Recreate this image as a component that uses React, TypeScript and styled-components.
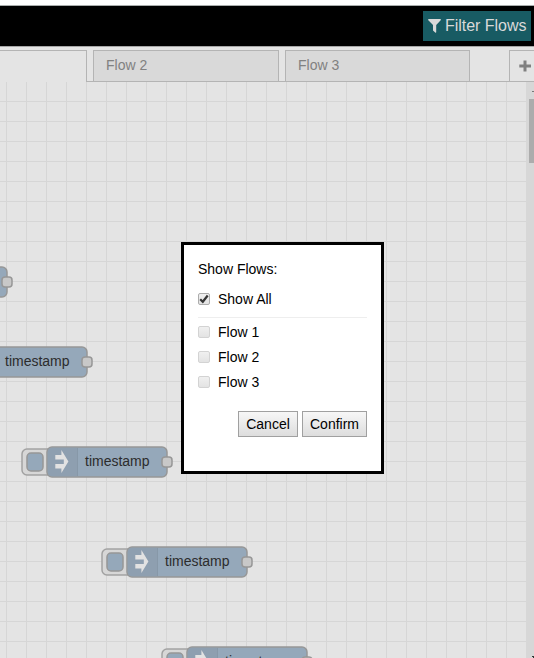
import React from "react";
import styled, { createGlobalStyle } from "styled-components";

const GlobalStyle = createGlobalStyle`
  * { box-sizing: border-box; }
  body { margin: 0; background: #fff; overflow: hidden; font-family: "Liberation Sans", Arial, sans-serif; font-size: 14px; }
`;

const Page = styled.div`
  position: relative;
  display: flex;
  flex-direction: column;
  width: 534px;
  height: 658px;
  padding-top: 5px;
  overflow: hidden;
`;

const Header = styled.header`
  flex: none;
  display: flex;
  justify-content: flex-end;
  align-items: flex-start;
  height: 42px;
  padding: 5px 3px 0 0;
  background: #000;
  border-top: 1px solid #a9adac;
  border-bottom: 1px solid #a6a6a6;
`;

const FilterButton = styled.button`
  display: flex;
  align-items: center;
  gap: 4px;
  width: 108px;
  height: 30px;
  padding: 0 0 0 5px;
  border: 0;
  background: #185b63;
  color: #d9d9d9;
  font: 16px/30px "Liberation Sans", Arial, sans-serif;
  letter-spacing: -0.03px;
  white-space: nowrap;
`;

const TabBar = styled.nav`
  flex: none;
  display: flex;
  height: 35px;
  padding-top: 3px;
  background: linear-gradient(#b4b4b4, #b4b4b4) bottom / 100% 1px no-repeat #e4e4e4;
`;

const Tab = styled.div<{ $width: number; $active?: boolean }>`
  flex: none;
  width: ${(p) => p.$width}px;
  height: ${(p) => (p.$active ? 32 : 31)}px;
  margin-right: 6px;
  padding-left: 12px;
  border: 1px solid #b4b4b4;
  border-bottom: 0;
  border-left-width: ${(p) => (p.$active ? 0 : 1)}px;
  background: ${(p) => (p.$active ? "#e4e4e4" : "#d9d9d9")};
  color: #818181;
  line-height: 28px;
`;

const AddTab = styled.button`
  display: flex;
  align-items: center;
  width: 25px;
  height: 31px;
  margin-left: auto;
  padding: 0 0 0 9px;
  border: solid #b4b4b4;
  border-width: 1px 0 0 1px;
  background: #e4e4e4;
`;

const Workspace = styled.main`
  flex: 1;
  display: flex;
  min-height: 0;
`;

const Canvas = styled.div`
  position: relative;
  flex: 1;
  overflow: hidden;
  background-color: #e4e4e4;
  background-image: linear-gradient(90deg, #d6d6d6 1px, transparent 1px),
    linear-gradient(#d6d6d6 1px, transparent 1px);
  background-size: 20px 20px;
  background-position: 6px 19px;
`;

const Scrollbar = styled.div`
  display: flex;
  flex-direction: column;
  justify-content: space-between;
  align-items: flex-end;
  width: 8px;
  background: #d7d7d7;
`;

const Thumb = styled.div`
  width: 5px;
  height: 64px;
  margin-bottom: auto;
  background: #acacac;
`;

const NodeGroup = styled.div<{ $x: number; $y: number }>`
  position: absolute;
  left: ${(p) => p.$x}px;
  top: ${(p) => p.$y}px;
  width: 154px;
  height: 32px;
`;

const NodeShape = styled.svg`
  display: block;
`;

const NodeLabel = styled.span`
  position: absolute;
  left: 64px;
  top: 0;
  color: #2c2c2c;
  line-height: 30px;
`;

const Dialog = styled.section`
  position: absolute;
  left: 181px;
  top: 242px;
  width: 203px;
  height: 232px;
  padding: 15px 14px 0;
  border: 3px solid #000;
  background: #fff;
  color: #000;
`;

const Title = styled.div`
  height: 19px;
  line-height: 19px;
`;

const Option = styled.label<{ $main?: boolean }>`
  display: flex;
  align-items: center;
  gap: 8px;
  height: ${(p) => (p.$main ? 38 : 25)}px;
  padding-top: ${(p) => (p.$main ? 2 : 0)}px;
  padding-bottom: ${(p) => (p.$main ? 0 : 1)}px;
  line-height: 20px;
`;

const Options = styled.div`
  padding-top: 2px;
  border-top: 1px solid #eee;
`;

const Check = styled.span<{ $on?: boolean }>`
  display: flex;
  align-items: center;
  justify-content: center;
  width: 12px;
  height: 12px;
  border: 1px solid ${(p) => (p.$on ? "#acacac" : "#d3d3d3")};
  border-radius: 2px;
  background: linear-gradient(#f0f0f0, #e3e3e3);
`;

const Actions = styled.div`
  display: flex;
  justify-content: flex-end;
  gap: 4px;
  margin-top: 16px;
`;

const ActionButton = styled.button<{ $width: number }>`
  width: ${(p) => p.$width}px;
  height: 26px;
  padding: 0;
  border: 1px solid #a0a0a0;
  background: linear-gradient(#f7f7f7, #dddddd);
  color: #000;
  font: 14px/24px "Liberation Sans", Arial, sans-serif;
`;

const nodes = [
  { x: -139, y: 184, label: "" },
  { x: -59, y: 264, label: "timestamp" },
  { x: 21, y: 364, label: "timestamp" },
  { x: 101, y: 464, label: "timestamp" },
  { x: 161, y: 564, label: "timestamp" },
];

function InjectNode({ x, y, label }: { x: number; y: number; label: string }) {
  return (
    <NodeGroup $x={x} $y={y}>
      <NodeShape width="154" height="32" viewBox="0 0 154 32" stroke="#979797" strokeWidth="1.5">
        <rect x="1" y="3" width="32" height="26" rx="5" fill="#d7d7d7" stroke="#a2a2a2" />
        <rect x="6" y="7" width="16" height="18" rx="4" fill="#95a8ba" />
        <rect x="26" y="1" width="120" height="30" rx="5" fill="#95a8ba" />
        <path d="M56 1.7V30.3H31a4.3 4.3 0 0 1-4.3-4.3V6A4.3 4.3 0 0 1 31 1.7Z" fill="#8e9fb0" stroke="none" />
        <rect x="56" y="2" width="1" height="28" fill="#8798a8" stroke="none" />
        <path d="M40.4 4 47.4 15.5 40.4 27V22.5H34.3V18H42.8V13.5H34.3V9H40.4Z" fill="#e2e2e2" stroke="none" />
        <rect x="141" y="11" width="10" height="10" rx="3" fill="#c8c8c8" />
      </NodeShape>
      {label && <NodeLabel>{label}</NodeLabel>}
    </NodeGroup>
  );
}

export default function App() {
  return (
    <>
      <GlobalStyle />
      <Page>
        <Header>
          <FilterButton>
            <svg width="13" height="14" viewBox="0 0 13 14" fill="currentColor">
              <path d="M.7 0H12.3Q13.3.3 12.7 1.2L8.2 6V13.2Q7.9 14 7.2 13.6L5 11.5V6L.3 1.2Q-.2.3.7 0Z" />
            </svg>
            Filter Flows
          </FilterButton>
        </Header>
        <TabBar>
          <Tab $width={87} $active />
          <Tab $width={186}>Flow 2</Tab>
          <Tab $width={185}>Flow 3</Tab>
          <AddTab aria-label="Add flow">
            <svg width="12" height="12" viewBox="0 0 12 12" fill="#808080">
              <path d="M4.5.5h3v4H12v3H7.5v4h-3v-4H.3v-3h4.2Z" />
            </svg>
          </AddTab>
        </TabBar>
        <Workspace>
          <Canvas>
            {nodes.map((n) => <InjectNode key={n.y} {...n} />)}
          </Canvas>
          <Scrollbar>
            <svg width="3" height="17" viewBox="0 0 3 17"><path d="M0 10h1v-1h2v1H0Z" fill="#777" /></svg>
            <Thumb />
            <svg width="2" height="2" viewBox="0 0 2 2"><path d="M0 0h2v2H1V1H0Z" fill="#333" /></svg>
          </Scrollbar>
        </Workspace>
        <Dialog>
          <Title>Show Flows:</Title>
          <Option $main>
            <Check $on>
              <svg width="10" height="10" viewBox="0 0 10 10" fill="none" stroke="#363636" strokeWidth="2.2">
                <path d="M1.2 5.2 3.8 7.8 8.7 1.5" />
              </svg>
            </Check>
            Show All
          </Option>
          <Options>
            {["Flow 1", "Flow 2", "Flow 3"].map((f) => (
              <Option key={f}><Check />{f}</Option>
            ))}
          </Options>
          <Actions>
            <ActionButton $width={60}>Cancel</ActionButton>
            <ActionButton $width={65}>Confirm</ActionButton>
          </Actions>
        </Dialog>
      </Page>
    </>
  );
}
